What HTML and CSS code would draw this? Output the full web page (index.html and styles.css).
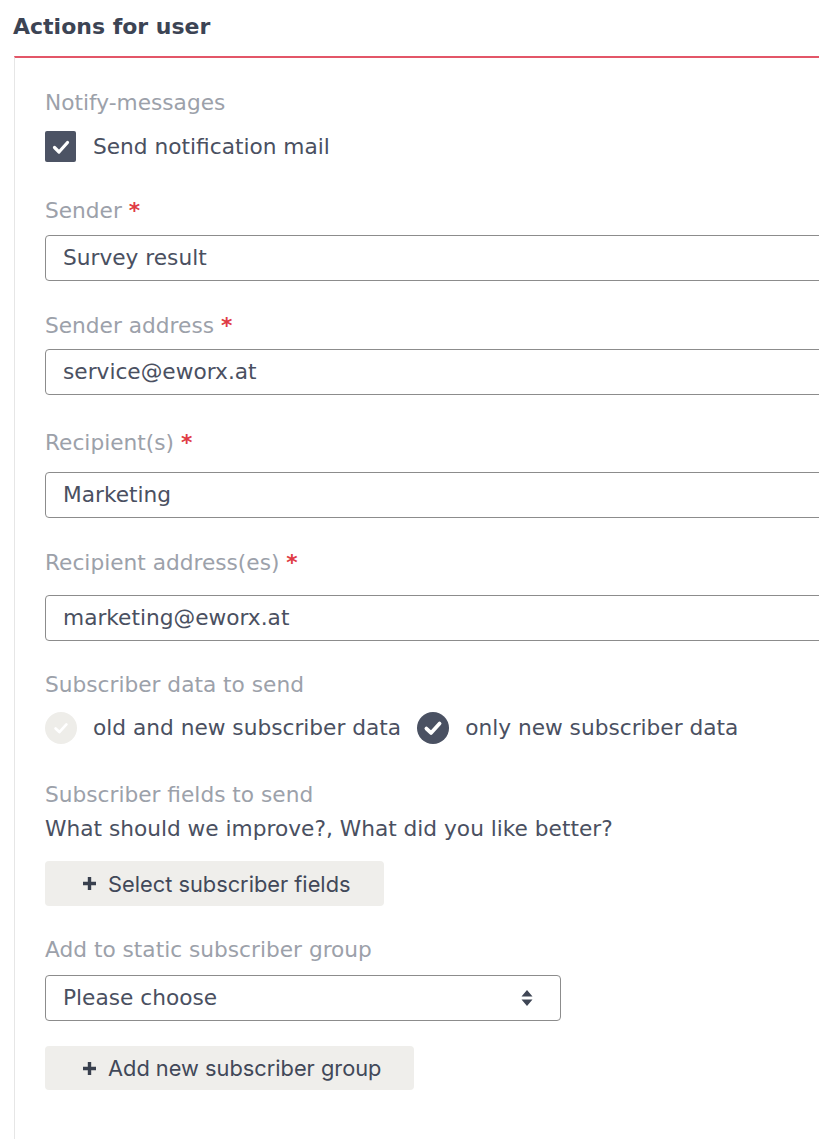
FILE: index.html
```html
<!DOCTYPE html>
<html lang="en">
<head>
    <meta charset="UTF-8">
    <meta name="viewport" content="width=device-width, initial-scale=1.0">
    <title>Actions for user</title>
    <link rel="stylesheet" href="styles.css">
</head>
<body>
<h2 class="section-title">Actions for user</h2>

<div class="panel">
    <div class="label">Notify-messages</div>
    <label class="check-row">
        <span class="checkbox">
            <svg width="20" height="20" viewBox="0 0 20 20"><path d="M3.5 10.5 L8 15 L16.5 5.5" fill="none" stroke="#fff" stroke-width="3.2" stroke-linecap="round" stroke-linejoin="round"/></svg>
        </span>
        Send notification mail
    </label>

    <div class="field sender">
        <div class="label">Sender <span class="req">*</span></div>
        <div class="input">Survey result</div>
    </div>

    <div class="field sender-address">
        <div class="label">Sender address <span class="req">*</span></div>
        <div class="input">service@eworx.at</div>
    </div>

    <div class="field recipients">
        <div class="label">Recipient(s) <span class="req">*</span></div>
        <div class="input">Marketing</div>
    </div>

    <div class="field recipient-address">
        <div class="label">Recipient address(es) <span class="req">*</span></div>
        <div class="input">marketing@eworx.at</div>
    </div>

    <div class="field">
        <div class="label">Subscriber data to send</div>
        <div class="radio-row">
            <span class="radio off">
                <svg width="18" height="18" viewBox="0 0 20 20"><path d="M4 10.5 L8.2 14.5 L16 6" fill="none" stroke="#fff" stroke-width="3" stroke-linecap="round" stroke-linejoin="round"/></svg>
            </span>
            <span class="radio-text">old and new subscriber data</span>
            <span class="radio on">
                <svg width="22" height="22" viewBox="0 0 20 20"><path d="M4 10.5 L8.2 14.5 L16 6" fill="none" stroke="#fff" stroke-width="3.4" stroke-linecap="round" stroke-linejoin="round"/></svg>
            </span>
            <span class="radio-text">only new subscriber data</span>
        </div>
    </div>

    <div class="field wide">
        <div class="label">Subscriber fields to send</div>
        <div class="value">What should we improve?, What did you like better?</div>
        <button class="btn">
            <svg width="15" height="15" viewBox="0 0 15 15"><path d="M7.5 1 V14 M1 7.5 H14" stroke="#39404e" stroke-width="3.4"/></svg>
            Select subscriber fields
        </button>
    </div>

    <div class="field group">
        <div class="label">Add to static subscriber group</div>
        <div class="select">
            Please choose
            <svg width="12" height="18" viewBox="0 0 12 18"><path d="M6 1 L11.5 7.5 H0.5 Z M6 17 L11.5 10.5 H0.5 Z" fill="#3f4655"/></svg>
        </div>
        <button class="btn btn-add">
            <svg width="15" height="15" viewBox="0 0 15 15"><path d="M7.5 1 V14 M1 7.5 H14" stroke="#39404e" stroke-width="3.4"/></svg>
            Add new subscriber group
        </button>
    </div>
</div>
</body>
</html>
```

FILE: styles.css
```css
body {
    margin: 0;
    font-family: "DejaVu Sans", Verdana, sans-serif;
    font-size: 21.7px;
    color: #4a5061;
    background: #fff;
    overflow: hidden;
}

.section-title {
    margin: 0;
    padding: 12px 0 0 13px;
    height: 56px;
    box-sizing: border-box;
    font-size: 22px;
    line-height: 30px;
    font-weight: bold;
    color: #3c4454;
}

.panel {
    margin-left: 14px;
    width: 1000px;
    min-height: 1200px;
    border-left: 1px solid #e6e6e6;
    border-top: 2px solid #e35668;
    padding: 30px 0 0 30px;
}

.label {
    line-height: 30px;
    color: #9ca1aa;
}

.req {
    color: #e03b45;
    font-weight: bold;
}

.check-row {
    display: flex;
    align-items: center;
    gap: 17px;
    margin-top: 13px;
    height: 31px;
    line-height: 30px;
}

.checkbox {
    width: 31px;
    height: 31px;
    border-radius: 2px;
    background: #4c5364;
    display: flex;
    align-items: center;
    justify-content: center;
}

.field {
    margin-top: 29px;
}

.field .label {
    margin-bottom: 12px;
}

.field.sender {
    margin-top: 34px;
}

.field.sender .label {
    margin-bottom: 9px;
}

.field.sender-address {
    margin-top: 30px;
}

.field.sender-address .label {
    margin-bottom: 8px;
}

.field.recipients {
    margin-top: 33px;
}

.field.recipients .label {
    margin-bottom: 14px;
}

.field.recipient-address {
    margin-top: 30px;
}

.field.recipient-address .label {
    margin-bottom: 17px;
}

.input,
.select {
    height: 46px;
    box-sizing: border-box;
    border: 1px solid #8c8c8c;
    border-radius: 4px;
    padding: 0 17px;
    line-height: 44px;
    background: #fff;
}

.select {
    width: 516px;
    display: flex;
    align-items: center;
    justify-content: space-between;
    padding-right: 27px;
}

.radio-row {
    display: flex;
    align-items: center;
    height: 32px;
    line-height: 30px;
}

.radio {
    width: 32px;
    height: 32px;
    border-radius: 50%;
    display: flex;
    align-items: center;
    justify-content: center;
    margin-right: 16px;
}

.radio.off {
    background: #eeede9;
}

.radio.on {
    background: #4a5162;
}

.radio-text {
    margin-right: 16px;
}

.field.wide {
    margin-top: 36px;
}

.field.wide .label {
    margin-bottom: 4px;
}

.value {
    line-height: 30px;
}

.field.group .label {
    margin-bottom: 10px;
}

.btn {
    display: flex;
    align-items: center;
    gap: 11px;
    margin-top: 17px;
    height: 45px;
    padding: 0 33px 0 37px;
    border: none;
    border-radius: 4px;
    background: #efeeeb;
    font-family: Inter, "Noto Sans", sans-serif;
    font-size: 21.8px;
    color: #414859;
    cursor: pointer;
}

.btn-add {
    margin-top: 25px;
    height: 44px;
}
```
